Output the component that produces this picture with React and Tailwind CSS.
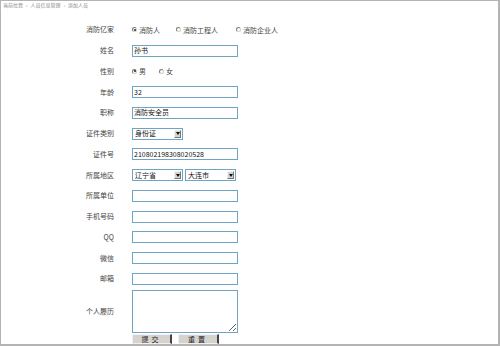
import React from "react";

const font = { fontFamily: '"Noto Sans CJK SC", "Noto Sans", sans-serif' };

function Radio({ checked, label, className = "" }) {
  return (
    <span className={`flex items-center ${className}`}>
      <span className="relative w-[5px] h-[5px] rounded-full border border-[#7a7a7a] border-r-[#d0d0d0] border-b-[#d0d0d0] bg-white">
        {checked && (
          <span className="absolute left-[0.5px] top-[0.5px] w-[2px] h-[2px] rounded-full bg-[#222]" />
        )}
      </span>
      <span className="ml-[2px] text-[7px] text-[#444]">{label}</span>
    </span>
  );
}

function Field({ value = "", w = "w-[106px]" }) {
  return (
    <div className={`${w} h-[12px] border border-[#6ea4c4] bg-white flex items-center px-[1px] text-[7px] text-[#111] leading-none`}>
      {value}
    </div>
  );
}

function Select({ value }) {
  return (
    <div className="w-[51px] h-[12px] border border-[#6ea4c4] bg-white flex items-center justify-between pl-[2px] pr-[1px] text-[7px] text-[#111] leading-none">
      <span>{value}</span>
      <span className="w-[7px] h-[8px] bg-[#d6d3ce] border border-[#f2f2f2] border-r-[#777] border-b-[#777] flex items-center justify-center">
        <svg width="4" height="3" viewBox="0 0 4 3">
          <path d="M0 0 L4 0 L2 3 Z" fill="#111" />
        </svg>
      </span>
    </div>
  );
}

function Row({ label, children }) {
  return (
    <div className="flex items-center h-[20.75px]">
      <div className="w-[113px] text-right text-[7px] text-[#444] leading-none">{label}</div>
      <div className="ml-[18px] flex items-center">{children}</div>
    </div>
  );
}

export default function App() {
  return (
    <div style={font} className="w-[500px] h-[346px] bg-white overflow-hidden border-t border-l border-r-2 border-b-2 border-[#b4b4b4]">
      <div className="flex items-center gap-[3px] pl-[2px] h-[6px] text-[5px] text-[#8a8a8a] leading-none">
        <span>当前位置</span>
        <span>›</span>
        <span>人员信息管理</span>
        <span>›</span>
        <span>添加人员</span>
      </div>
      <div className="pt-[12.5px]">
        <Row label="消防亿家">
          <Radio checked label="消防人" />
          <Radio label="消防工程人" className="ml-[16px]" />
          <Radio label="消防企业人" className="ml-[18px]" />
        </Row>
        <Row label="姓名">
          <Field value="孙书" />
        </Row>
        <Row label="性别">
          <Radio checked label="男" />
          <Radio label="女" className="ml-[13px]" />
        </Row>
        <Row label="年龄">
          <Field value="32" />
        </Row>
        <Row label="职称">
          <Field value="消防安全员" />
        </Row>
        <Row label="证件类别">
          <Select value="身份证" />
        </Row>
        <Row label="证件号">
          <Field value="210802198308020528" />
        </Row>
        <Row label="所属地区">
          <Select value="辽宁省" />
          <div className="ml-[2px]">
            <Select value="大连市" />
          </div>
        </Row>
        <Row label="所属单位">
          <Field />
        </Row>
        <Row label="手机号码">
          <Field />
        </Row>
        <Row label="QQ">
          <Field />
        </Row>
        <Row label="微信">
          <Field />
        </Row>
        <Row label="邮箱">
          <Field />
        </Row>
        <div className="flex items-center h-[44px]">
          <div className="w-[113px] text-right text-[7px] text-[#444] leading-none">个人履历</div>
          <textarea className="ml-[18px] w-[106px] h-[43px] border border-[#6ea4c4] bg-white outline-none" />
        </div>
        <div className="flex mt-[1px] ml-[131px] gap-[6px]">
          <button className="w-[40px] h-[10px] bg-[#d6d3ce] border border-[#f0f0f0] border-r-2 border-r-[#444] text-[7px] text-[#222] leading-none tracking-[3px]">
            提交
          </button>
          <button className="w-[41px] h-[10px] bg-[#d6d3ce] border border-[#f0f0f0] border-r-2 border-r-[#444] text-[7px] text-[#222] leading-none tracking-[3px]">
            重置
          </button>
        </div>
      </div>
    </div>
  );
}
